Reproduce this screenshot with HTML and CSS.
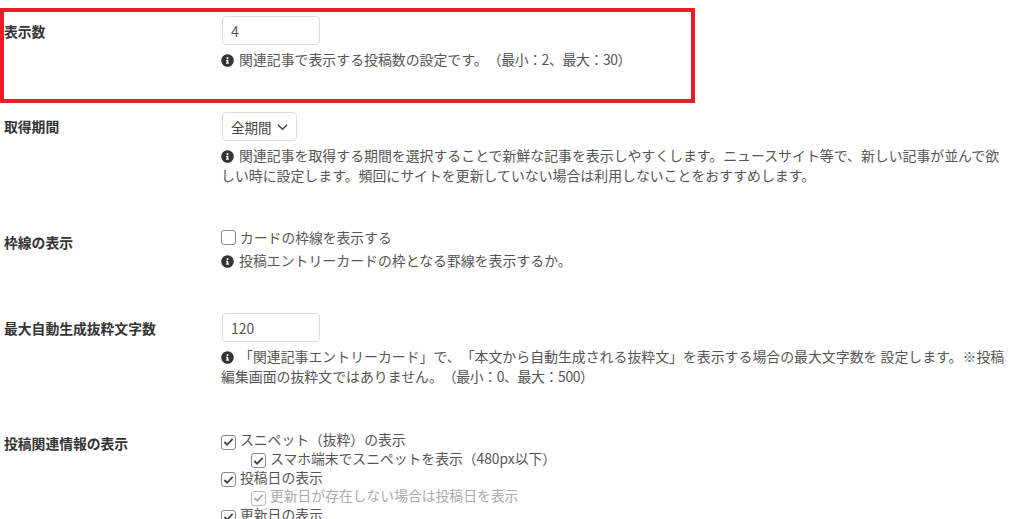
FILE: index.html
```html
<!DOCTYPE html>
<html lang="ja">
<head>
    <meta charset="UTF-8">
    <title>関連記事設定</title>
    <link rel="stylesheet" href="styles.css">
</head>
<body>
    <div class="highlight"></div>
    <div class="settings">
        <div class="row row-count">
            <div class="label">表示数</div>
            <div class="field">
                <input class="text-input" type="text" value="4">
                <p class="help"><svg class="info" viewBox="0 0 512 512"><path d="M256 8a248 248 0 1 0 0 496 248 248 0 0 0 0-496zm0 110a42 42 0 1 1 0 84 42 42 0 0 1 0-84zm56 254c0 7-5 12-12 12h-88c-7 0-12-5-12-12v-24c0-7 5-12 12-12h12v-64h-12c-7 0-12-5-12-12v-24c0-7 5-12 12-12h64c7 0 12 5 12 12v100h12c7 0 12 5 12 12z"/></svg>関連記事で表示する投稿数の設定です。<span class="range">（最小：2、最大：30）</span></p>
            </div>
        </div>
        <div class="row row-period">
            <div class="label">取得期間</div>
            <div class="field">
                <div class="select">全期間<svg class="chevron" viewBox="0 0 12 8"><path d="M1 1.5l5 5 5-5"/></svg></div>
                <p class="help"><svg class="info" viewBox="0 0 512 512"><path d="M256 8a248 248 0 1 0 0 496 248 248 0 0 0 0-496zm0 110a42 42 0 1 1 0 84 42 42 0 0 1 0-84zm56 254c0 7-5 12-12 12h-88c-7 0-12-5-12-12v-24c0-7 5-12 12-12h12v-64h-12c-7 0-12-5-12-12v-24c0-7 5-12 12-12h64c7 0 12 5 12 12v100h12c7 0 12 5 12 12z"/></svg>関連記事を取得する期間を選択することで新鮮な記事を表示しやすくします。ニュースサイト等で、新しい記事が並んで欲<br>しい時に設定します。頻回にサイトを更新していない場合は利用しないことをおすすめします。</p>
            </div>
        </div>
        <div class="row row-border">
            <div class="label">枠線の表示</div>
            <div class="field">
                <label class="check"><span class="box"></span>カードの枠線を表示する</label>
                <p class="help help-tight"><svg class="info" viewBox="0 0 512 512"><path d="M256 8a248 248 0 1 0 0 496 248 248 0 0 0 0-496zm0 110a42 42 0 1 1 0 84 42 42 0 0 1 0-84zm56 254c0 7-5 12-12 12h-88c-7 0-12-5-12-12v-24c0-7 5-12 12-12h12v-64h-12c-7 0-12-5-12-12v-24c0-7 5-12 12-12h64c7 0 12 5 12 12v100h12c7 0 12 5 12 12z"/></svg>投稿エントリーカードの枠となる罫線を表示するか。</p>
            </div>
        </div>
        <div class="row row-excerpt">
            <div class="label">最大自動生成抜粋文字数</div>
            <div class="field">
                <input class="text-input" type="text" value="120">
                <p class="help"><svg class="info" viewBox="0 0 512 512"><path d="M256 8a248 248 0 1 0 0 496 248 248 0 0 0 0-496zm0 110a42 42 0 1 1 0 84 42 42 0 0 1 0-84zm56 254c0 7-5 12-12 12h-88c-7 0-12-5-12-12v-24c0-7 5-12 12-12h12v-64h-12c-7 0-12-5-12-12v-24c0-7 5-12 12-12h64c7 0 12 5 12 12v100h12c7 0 12 5 12 12z"/></svg>「関連記事エントリーカード」で、「本文から自動生成される抜粋文」を表示する場合の最大文字数を 設定します。※投稿<br>編集画面の抜粋文ではありません。<span class="range">（最小：0、最大：500）</span></p>
            </div>
        </div>
        <div class="row row-meta">
            <div class="label">投稿関連情報の表示</div>
            <div class="field checks">
                <label class="check"><span class="box on"><svg viewBox="0 0 12 10"><path d="M1.5 5l3 3 6-6.5"/></svg></span>スニペット（抜粋）の表示</label>
                <label class="check sub"><span class="box on"><svg viewBox="0 0 12 10"><path d="M1.5 5l3 3 6-6.5"/></svg></span>スマホ端末でスニペットを表示（480px以下）</label>
                <label class="check"><span class="box on"><svg viewBox="0 0 12 10"><path d="M1.5 5l3 3 6-6.5"/></svg></span>投稿日の表示</label>
                <label class="check sub off"><span class="box on"><svg viewBox="0 0 12 10"><path d="M1.5 5l3 3 6-6.5"/></svg></span>更新日が存在しない場合は投稿日を表示</label>
                <label class="check"><span class="box on"><svg viewBox="0 0 12 10"><path d="M1.5 5l3 3 6-6.5"/></svg></span>更新日の表示</label>
            </div>
        </div>
    </div>
</body>
</html>
```

FILE: styles.css
```css
html, body {
    height: 519px;
    overflow: hidden;
}
body {
    margin: 0;
    background-color: white;
    font-family: "Noto Sans CJK JP", "Liberation Sans", sans-serif;
    font-size: 13.9px;
    color: #555;
    text-spacing-trim: space-all;
}
.highlight {
    position: absolute;
    left: 0;
    top: 8px;
    width: 695px;
    height: 95px;
    box-sizing: border-box;
    border: 4px solid #ed1c24;
}
.settings {
    padding: 16px 0 0 4px;
}
.row {
    display: grid;
    grid-template-columns: 217px 790px;
}
.row-count {
    height: 96px;
}
.row-period {
    height: 116px;
}
.row-border {
    height: 85px;
}
.row-excerpt {
    height: 117px;
}
.label {
    font-weight: bold;
    font-size: 13.8px;
    color: #333;
    line-height: 20px;
    padding-top: 5px;
}
.row-period .label, .row-border .label {
    padding-top: 4px;
}
.row-meta .label {
    padding-top: 3px;
}
.text-input {
    display: block;
    box-sizing: border-box;
    width: 98px;
    height: 29px;
    margin-left: 1px;
    padding: 0 8px;
    border: 1px solid #ddd;
    border-radius: 4px;
    font-family: inherit;
    font-size: 14px;
    color: #555;
}
.select {
    display: flex;
    align-items: center;
    box-sizing: border-box;
    width: 75px;
    height: 29px;
    margin-left: 1px;
    padding-left: 8px;
    border: 1px solid #ddd;
    border-radius: 4px;
    font-size: 13.5px;
    color: #444;
}
.chevron {
    width: 11px;
    height: 8px;
    margin-left: 5px;
}
.chevron path {
    fill: none;
    stroke: #444;
    stroke-width: 1.6;
}
.help {
    margin: 4px 0 0;
    line-height: 20px;
    white-space: nowrap;
}
.help-tight {
    margin-top: 3px;
}
.range {
    letter-spacing: -0.4px;
}
.info {
    width: 13px;
    height: 13px;
    margin-right: 5px;
    vertical-align: -2px;
    fill: #333;
}
.check {
    display: block;
    height: 18.8px;
    font-size: 13.8px;
    line-height: 19px;
    white-space: nowrap;
}
.box {
    display: inline-flex;
    align-items: center;
    justify-content: center;
    box-sizing: border-box;
    width: 15px;
    height: 15px;
    margin-right: 4px;
    vertical-align: -2px;
    border: 1px solid #888;
    border-radius: 3px;
    background-color: white;
}
.box svg {
    width: 11px;
    height: 10px;
}
.box svg path {
    fill: none;
    stroke: #444;
    stroke-width: 2;
}
.sub {
    padding-left: 30px;
}
.off {
    color: #aaa;
}
.off .box {
    border-color: #bbb;
}
.off .box svg path {
    stroke: #aaa;
}
```
